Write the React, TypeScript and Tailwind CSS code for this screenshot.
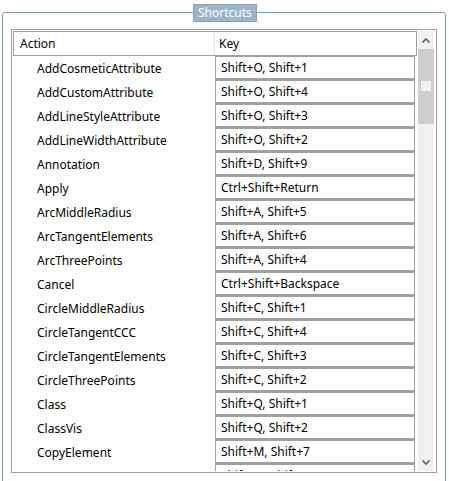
import React from 'react';

type Shortcut = { action: string; key: string };

const shortcuts: Shortcut[] = [
  { action: 'AddCosmeticAttribute', key: 'Shift+O, Shift+1' },
  { action: 'AddCustomAttribute', key: 'Shift+O, Shift+4' },
  { action: 'AddLineStyleAttribute', key: 'Shift+O, Shift+3' },
  { action: 'AddLineWidthAttribute', key: 'Shift+O, Shift+2' },
  { action: 'Annotation', key: 'Shift+D, Shift+9' },
  { action: 'Apply', key: 'Ctrl+Shift+Return' },
  { action: 'ArcMiddleRadius', key: 'Shift+A, Shift+5' },
  { action: 'ArcTangentElements', key: 'Shift+A, Shift+6' },
  { action: 'ArcThreePoints', key: 'Shift+A, Shift+4' },
  { action: 'Cancel', key: 'Ctrl+Shift+Backspace' },
  { action: 'CircleMiddleRadius', key: 'Shift+C, Shift+1' },
  { action: 'CircleTangentCCC', key: 'Shift+C, Shift+4' },
  { action: 'CircleTangentElements', key: 'Shift+C, Shift+3' },
  { action: 'CircleThreePoints', key: 'Shift+C, Shift+2' },
  { action: 'Class', key: 'Shift+Q, Shift+1' },
  { action: 'ClassVis', key: 'Shift+Q, Shift+2' },
  { action: 'CopyElement', key: 'Shift+M, Shift+7' },
  { action: 'CopyMove', key: 'Shift+M, Shift+8' },
];

const Chevron = ({ down }: { down?: boolean }) => (
  <svg width="8" height="5" viewBox="0 0 8 5" className={down ? 'rotate-180' : ''}>
    <polyline points="0.5,4.5 4,1 7.5,4.5" fill="none" stroke="#606060" strokeWidth="1.6" />
  </svg>
);

export default function App() {
  return (
    <div
      className="w-[449px] h-[481px] bg-white overflow-hidden text-[12px] text-black"
      style={{ fontFamily: '"Segoe UI", "Noto Sans", sans-serif' }}
    >
      <div className="relative mt-[12px] ml-[2px] w-[444px] h-[480px] border border-[#7f9db9] rounded-[3px] pt-[16px] pl-[8px]">
        <div className="absolute left-[190px] top-[-9px] h-[18px] px-[4px] bg-[#9db5ca] border border-[#86a3bc] text-white leading-[16px]">
          Shortcuts
        </div>

        <div className="w-[426px] h-[444px] border border-[#a0a0a0] p-px flex">
          <div className="w-[404px] h-full overflow-hidden">
            <div className="flex h-[25px] border border-[#a0a0a0] leading-[23px]">
              <div className="w-[201px] pl-[6px] border-r border-[#e3e3e3]">Action</div>
              <div className="flex-1 pl-[4px]">Key</div>
            </div>
            {shortcuts.map((s) => (
              <div key={s.action} className="flex h-[24px]">
                <div className="w-[202px] pl-[24px] leading-[25px] whitespace-nowrap">{s.action}</div>
                <div className="w-[200px] h-[24px] border border-[#a0a0a0] border-b-2 pl-[5px] leading-[22px] whitespace-nowrap">
                  {s.key}
                </div>
              </div>
            ))}
          </div>
          <div className="ml-px w-[16px] h-full bg-[#f0f0f0] flex flex-col">
            <div className="h-[18px] flex items-center justify-center">
              <Chevron />
            </div>
            <div className="h-[75px] bg-[#cdcdcd] flex justify-center pt-[32px]">
              <div className="w-[10px] h-[10px] bg-[#f0f0f0]" />
            </div>
            <div className="flex-1" />
            <div className="h-[18px] flex items-center justify-center">
              <Chevron down />
            </div>
          </div>
        </div>
      </div>
    </div>
  );
}
